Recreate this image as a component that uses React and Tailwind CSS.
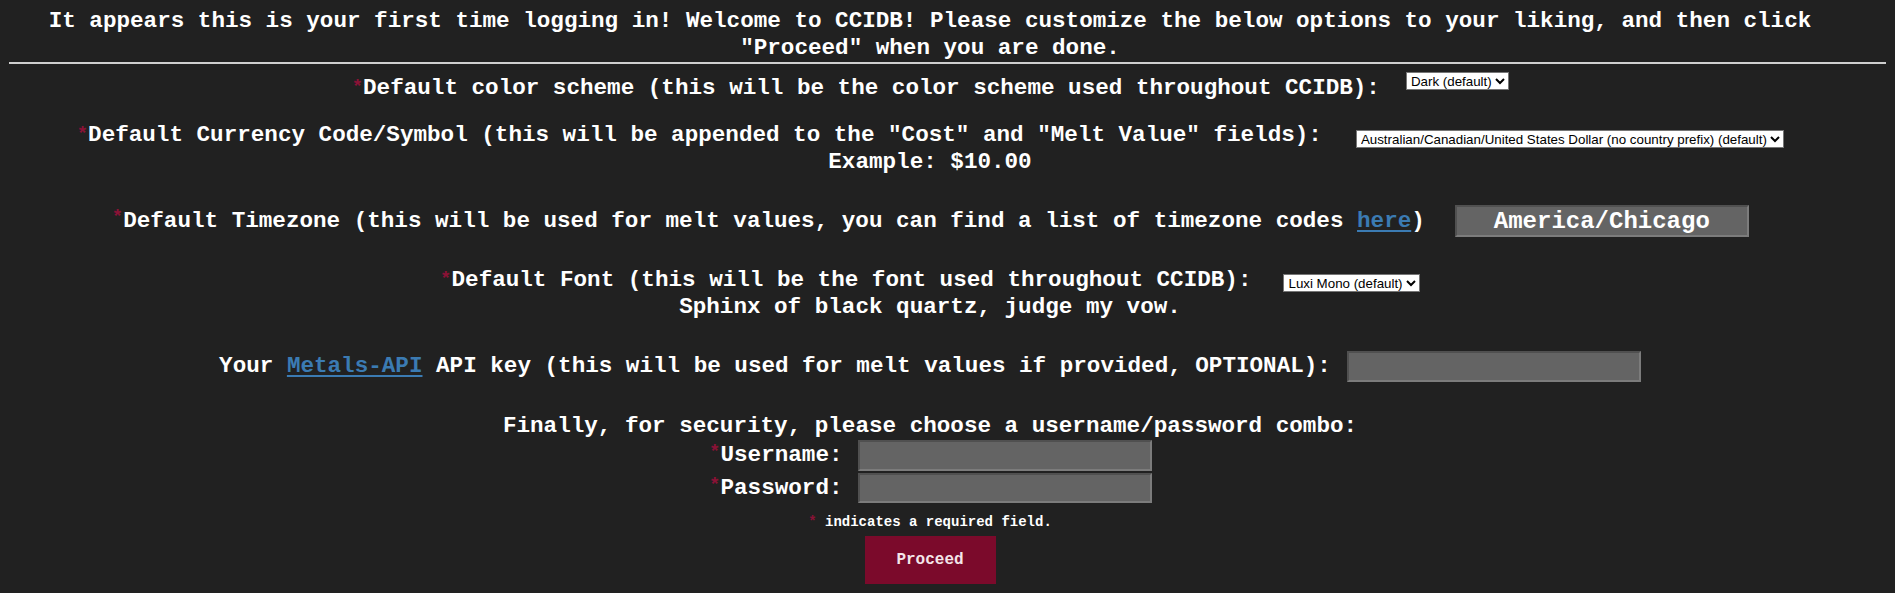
import React from 'react';

const Req = () => (
  <span className="inline-block w-[12px] text-right text-[19px] leading-none text-[#8a1236] self-start mt-[3px]">*</span>
);

const boxInput = 'w-[294px] bg-[#646464] border-2 border-t-[#505050] border-l-[#505050] border-b-[#7c7c7c] border-r-[#7c7c7c] text-white text-center outline-none';
const nativeSelect = 'h-[18px] bg-white text-black border border-[#767676] text-[13.33px] font-["Liberation_Sans",Arial,sans-serif] font-normal leading-none';

export default function App() {
  return (
    <div className="min-h-screen bg-[#212121] text-white font-['Liberation_Mono','DejaVu_Sans_Mono',monospace] font-bold text-[22.6px] pb-2">
      <div className="pl-2 pr-[43px] pt-[8px] leading-[27px] text-center">
        It appears this is your first time logging in! Welcome to CCIDB! Please customize the below options to your liking, and then click
        <br />
        "Proceed" when you are done.
      </div>
      <div className="mx-[9px] border-t-2 border-[#cfcfcf]" />

      <div className="pl-2 pr-[43px] leading-[27px]">
        {/* colour scheme */}
        <div className="mt-[11px] flex items-start justify-center">
          <Req />
          <span>Default color scheme (this will be the color scheme used throughout CCIDB):</span>
          <select defaultValue="dark" className={`${nativeSelect} ml-[26px] -mt-[3px]`}>
            <option value="dark">Dark (default)</option>
            <option value="light">Light</option>
          </select>
        </div>

        {/* currency */}
        <div className="mt-[20px] flex items-start justify-center">
          <Req />
          <span>Default Currency Code/Symbol (this will be appended to the "Cost" and "Melt Value" fields):</span>
          <select defaultValue="usd" className={`${nativeSelect} ml-[34px] mt-[8px]`}>
            <option value="usd">Australian/Canadian/United States Dollar (no country prefix) (default)</option>
          </select>
        </div>
        <div className="text-center">Example: $10.00</div>

        {/* timezone */}
        <div className="mt-[29px] flex items-center justify-center">
          <Req />
          <span>
            Default Timezone (this will be used for melt values, you can find a list of timezone codes{' '}
            <a href="#" className="text-[#3b7bb3] underline underline-offset-[3px]">here</a>)
          </span>
          <input readOnly defaultValue="America/Chicago" className={`${boxInput} h-[32px] ml-[30px] text-[24px] font-bold`} />
        </div>

        {/* font */}
        <div className="mt-[30px] flex items-start justify-center">
          <Req />
          <span>Default Font (this will be the font used throughout CCIDB):</span>
          <select defaultValue="luxi" className={`${nativeSelect} h-[17px] ml-[32px] mt-[7px]`}>
            <option value="luxi">Luxi Mono (default)</option>
          </select>
        </div>
        <div className="text-center">Sphinx of black quartz, judge my vow.</div>

        {/* api key */}
        <div className="mt-[30px] flex items-center justify-center">
          <span>
            Your <a href="#" className="text-[#3b7bb3] underline underline-offset-[3px]">Metals-API</a> API key (this will be used for melt values if provided, OPTIONAL):
          </span>
          <input className={`${boxInput} h-[31px] ml-[16px]`} />
        </div>

        {/* credentials */}
        <div className="mt-[31px] text-center">Finally, for security, please choose a username/password combo:</div>
        <div className="flex items-center justify-center">
          <Req />
          <span>Username:</span>
          <input className={`${boxInput} h-[31px] ml-[15px]`} />
        </div>
        <div className="mt-[2px] flex items-center justify-center">
          <Req />
          <span>Password:</span>
          <input type="password" className={`${boxInput} h-[30px] ml-[15px]`} />
        </div>

        <div className="mt-[10px] text-center text-[14px] leading-[18px]">
          <span className="text-[#8a1236]">*</span> indicates a required field.
        </div>
        <div className="mt-[5px] flex justify-center">
          <button className="w-[131px] h-[48px] bg-[#7b0a2b] text-[#f4e6e9] text-[16px] font-bold">Proceed</button>
        </div>
      </div>
    </div>
  );
}
